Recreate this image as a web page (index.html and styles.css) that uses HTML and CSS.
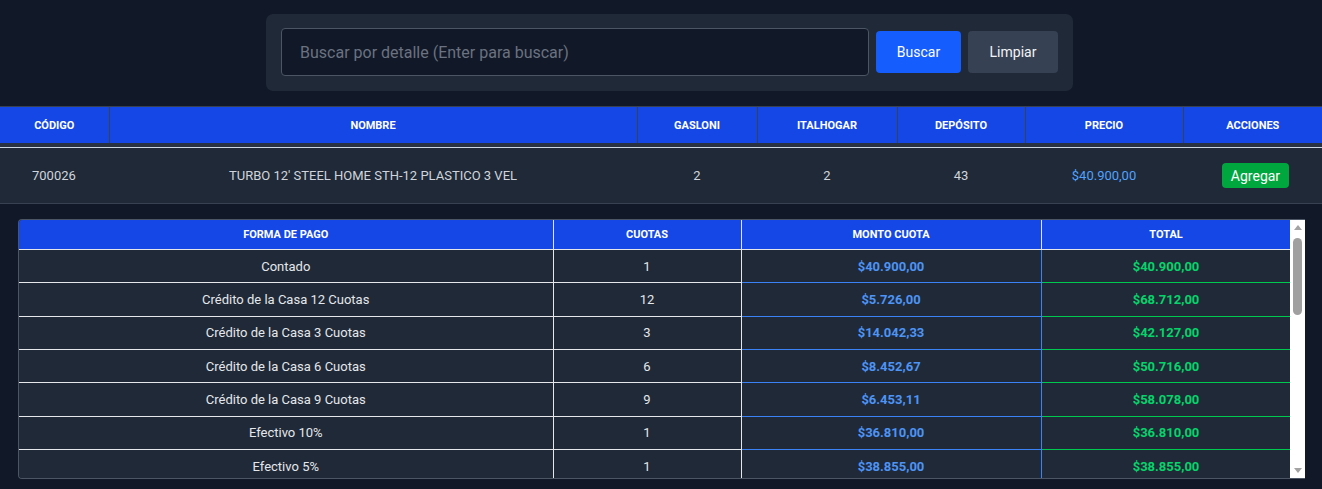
FILE: index.html
```html
<!DOCTYPE html>
<html lang="es">
<head>
<meta charset="utf-8">
<title>Buscar productos</title>
<link rel="stylesheet" href="styles.css">
</head>
<body>
<div class="search-wrap">
  <form class="search-panel">
    <input class="search-input" type="text" placeholder="Buscar por detalle (Enter para buscar)">
    <button type="button" class="btn btn-primary">Buscar</button>
    <button type="button" class="btn btn-secondary">Limpiar</button>
  </form>
</div>

<table class="products">
  <colgroup>
    <col class="c-cod"><col class="c-nom"><col class="c-gas"><col class="c-ita"><col class="c-dep"><col class="c-pre"><col class="c-acc">
  </colgroup>
  <thead>
    <tr>
      <th>Código</th><th>Nombre</th><th>Gasloni</th><th>Italhogar</th><th>Depósito</th><th>Precio</th><th>Acciones</th>
    </tr>
  </thead>
  <tbody>
    <tr class="spacer"><td colspan="7"></td></tr>
    <tr class="prod-row">
      <td class="left">700026</td>
      <td>TURBO 12' STEEL HOME STH-12 PLASTICO 3 VEL</td>
      <td>2</td>
      <td>2</td>
      <td>43</td>
      <td class="price">$40.900,00</td>
      <td><button type="button" class="btn-add">Agregar</button></td>
    </tr>
  </tbody>
</table>

<div class="detail">
  <div class="detail-box">
    <div class="detail-scroll">
      <table class="payments">
        <colgroup><col class="p-forma"><col class="p-cuotas"><col class="p-monto"><col class="p-total"></colgroup>
        <thead>
          <tr><th>Forma de pago</th><th>Cuotas</th><th>Monto cuota</th><th>Total</th></tr>
        </thead>
        <tbody>
          <tr><td>Contado</td><td>1</td><td class="monto">$40.900,00</td><td class="total">$40.900,00</td></tr>
          <tr><td>Crédito de la Casa 12 Cuotas</td><td>12</td><td class="monto">$5.726,00</td><td class="total">$68.712,00</td></tr>
          <tr><td>Crédito de la Casa 3 Cuotas</td><td>3</td><td class="monto">$14.042,33</td><td class="total">$42.127,00</td></tr>
          <tr><td>Crédito de la Casa 6 Cuotas</td><td>6</td><td class="monto">$8.452,67</td><td class="total">$50.716,00</td></tr>
          <tr><td>Crédito de la Casa 9 Cuotas</td><td>9</td><td class="monto">$6.453,11</td><td class="total">$58.078,00</td></tr>
          <tr><td>Efectivo 10%</td><td>1</td><td class="monto">$36.810,00</td><td class="total">$36.810,00</td></tr>
          <tr><td>Efectivo 5%</td><td>1</td><td class="monto">$38.855,00</td><td class="total">$38.855,00</td></tr>
        </tbody>
      </table>
    </div>
    <div class="scrollbar" aria-hidden="true">
      <span class="arrow arrow-up"></span>
      <div class="track"><span class="thumb"></span></div>
      <span class="arrow arrow-down"></span>
    </div>
  </div>
</div>
</body>
</html>
```

FILE: styles.css
```css
html, body {
  margin: 0;
  padding: 0;
  background: #111827;
  font-family: Roboto, "Noto Sans", "Liberation Sans", sans-serif;
  color: #d1d5db;
}

.search-wrap {
  display: flex;
  justify-content: center;
  padding-top: 14px;
}

.search-panel {
  margin: 0 0 0 17px;
  width: 807px;
  box-sizing: border-box;
  display: flex;
  align-items: center;
  gap: 7px;
  padding: 14px 15px 15px 15px;
  background: #1f2937;
  border-radius: 7px;
}

.search-input {
  width: 588px;
  height: 48px;
  box-sizing: border-box;
  background: #111827;
  border: 1px solid #4b5563;
  border-radius: 4px;
  padding: 0 18px;
  font-family: inherit;
  font-size: 16px;
  color: #e5e7eb;
  outline: none;
}
.search-input::placeholder { color: #6b7280; }

.btn {
  height: 42px;
  border: none;
  border-radius: 4px;
  font-family: inherit;
  font-size: 14px;
  color: #ffffff;
  cursor: pointer;
}
.btn-primary { width: 85px; background: #155dfc; }
.btn-secondary { width: 90px; background: #364153; color: #f3f4f6; }

/* main products table */
.products {
  margin-top: 15px;
  width: 100%;
  border-collapse: collapse;
  table-layout: fixed;
}
.c-cod { width: 109px; }
.c-nom { width: 528px; }
.c-gas { width: 120px; }
.c-ita { width: 140px; }
.c-dep { width: 128px; }
.c-pre { width: 158px; }
.c-acc { width: 139px; }

.products th {
  background: #1447e6;
  color: #ffffff;
  font-size: 11px;
  font-weight: 700;
  text-transform: uppercase;
  height: 36px;
  padding: 0;
  border-top: 1px solid #374151;
  border-left: 1px solid #374151;
  border-right: 1px solid #374151;
}
.products th:first-child { border-left: none; }
.products th:last-child { border-right: none; }

.products .spacer td {
  height: 4px;
  padding: 0;
  background: #283241;
  border-bottom: 1px solid #cbd5e1;
}

.prod-row td {
  background: #1f2937;
  height: 55px;
  padding: 0;
  text-align: center;
  font-size: 13px;
  color: #d1d5db;
  border-bottom: 1px solid #374151;
}
.prod-row td.left { text-align: left; padding-left: 32px; }
.prod-row td.price { color: #51a2ff; }

.btn-add {
  background: #00a63e;
  color: #ffffff;
  border: none;
  border-radius: 4px;
  height: 25px;
  padding: 0 9px;
  font-family: inherit;
  font-size: 14px;
  margin-left: 6px;
}

/* payment detail */
.detail {
  padding: 15px 17px 0 18px;
}
.detail-box {
  height: 260px;
  box-sizing: border-box;
  display: flex;
  border: 1px solid #4b5563;
  border-right: none;
  border-radius: 4px 0 0 4px;
  background: #1f2937;
  overflow: hidden;
}
.detail-scroll {
  flex: 1;
  overflow: hidden;
}

.scrollbar {
  width: 15px;
  flex: none;
  display: flex;
  flex-direction: column;
  align-items: center;
  background: #ffffff;
}
.arrow {
  flex: none;
  width: 0;
  height: 0;
  border-left: 4px solid transparent;
  border-right: 4px solid transparent;
}
.arrow-up {
  margin: 5px 0 4px;
  border-bottom: 5px solid #a3a3a3;
}
.arrow-down {
  margin: 4px 0 5px;
  border-top: 5px solid #a3a3a3;
}
.track {
  flex: 1;
  width: 100%;
  display: flex;
  justify-content: center;
  padding-top: 4px;
  box-sizing: border-box;
}
.thumb {
  width: 9px;
  height: 77px;
  border-radius: 5px;
  background: #a0a0a0;
}

.payments {
  width: 100%;
  border-collapse: collapse;
  table-layout: fixed;
}
.p-forma { width: 534px; }
.p-cuotas { width: 188px; }
.p-monto { width: 300px; }
.p-total { width: 250px; }

.payments th {
  background: #1447e6;
  color: #ffffff;
  font-size: 11px;
  font-weight: 700;
  text-transform: uppercase;
  height: 29px;
  padding: 0;
  border: 1px solid #e5e7eb;
  border-top: none;
}
.payments th:first-child { border-left: none; }

.payments td {
  height: 32.33px;
  padding: 0;
  text-align: center;
  font-size: 13px;
  color: #e5e7eb;
  background: #1f2937;
  border: 1px solid #e5e7eb;
}
.payments td:first-child { border-left: none; }
.payments td.monto {
  color: #4d94f5;
  font-weight: 700;
  border-color: #3b82f6;
}
.payments td.total {
  color: #05d46a;
  font-weight: 700;
  border-color: #00c950;
}
.payments tr:first-child td.monto { border-top-color: #e5e7eb; }
.payments tr:first-child td.total { border-top-color: #e5e7eb; }
```
